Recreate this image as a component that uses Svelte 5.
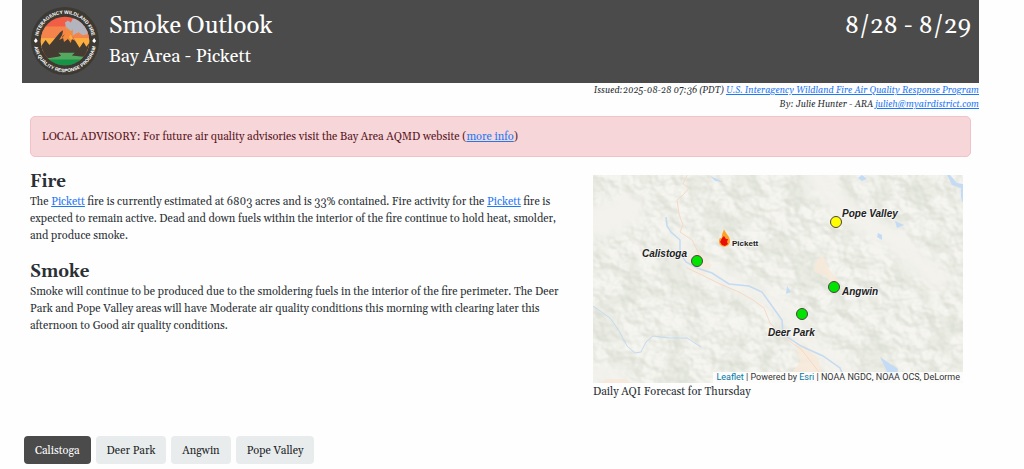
<svelte:options runes={true} />

<script lang="ts">
type Site = {
	name: string;
	x: number;
	y: number;
	labelX: number;
	labelY: number;
	color: string;
};

const sites: Site[] = [
	{ name: "Calistoga", x: 104, y: 86, labelX: 49, labelY: 82, color: "#00e400" },
	{ name: "Deer Park", x: 209, y: 139, labelX: 175, labelY: 161, color: "#00e400" },
	{ name: "Angwin", x: 241, y: 112, labelX: 249, labelY: 120, color: "#00e400" },
	{ name: "Pope Valley", x: 243, y: 47, labelX: 249, labelY: 42, color: "#ffff00" },
];

let active = $state("Calistoga");
</script>

<div class="page">
	<header class="banner">
		<svg class="logo" viewBox="0 0 72 72" role="img" aria-label="Interagency Wildland Fire Air Quality Response Program">
			<defs>
				<path id="ring-top" d="M 8 36 A 28 28 0 0 1 64 36" />
				<path id="ring-bottom" d="M 4 36 A 32 32 0 0 0 68 36" />
				<clipPath id="disc"><circle cx="36" cy="36" r="25" /></clipPath>
			</defs>
			<circle cx="36" cy="36" r="35" fill="#3d3933" />
			<g clip-path="url(#disc)">
				<rect x="10" y="10" width="52" height="52" fill="#f15d45" />
				<rect x="10" y="21" width="52" height="13" fill="#f5844c" />
				<rect x="10" y="33" width="52" height="14" fill="#fbad40" />
				<path
					d="M42 32 L37 23 L36 17 L39 15 L42 17 L44 13 L49 13 L51 16 L55 17 L60 24 L59 29 L54 30 L50 27 L46 29 Z"
					fill="#b3b4bd"
				/>
				<path
					d="M8 46 L16 35 L20 40 L31 27 L34 25 L33 31 L38 28 L44 32 L51 43 L55 37 L58 42 L64 34 V64 H8 Z"
					fill="#443b33"
				/>
				<path
					d="M30 35 L34 28 L33 33 L38 26 L37 21 L42 26 L44 24 L44 32 L47 36 L43 34 L42 38 L39 34 L35 37 L34 33 Z"
					fill="#f58a3c"
				/>
				<path d="M40 32 L42 29 L44 34 L42 35 Z" fill="#fbad40" />
				<path d="M10 55 L30 52 L32 51 L29 48 H46 L43 51 L62 53 V56 H10 Z" fill="#55a85f" />
				<rect x="10" y="55" width="52" height="8" fill="#159447" />
			</g>
			<text class="ring"><textPath href="#ring-top" startOffset="50%" text-anchor="middle">INTERAGENCY WILDLAND FIRE</textPath></text>
			<text class="ring"><textPath href="#ring-bottom" startOffset="50%" text-anchor="middle">AIR QUALITY RESPONSE PROGRAM</textPath></text>
			<path d="M4 36 L6 33 L8 36 L6 38 Z M64 36 L66 33 L68 36 L66 38 Z" fill="#fff" />
		</svg>
		<div class="titles">
			<h1>Smoke Outlook</h1>
			<p>Bay Area - Pickett</p>
		</div>
		<div class="dates">8/28 - 8/29</div>
	</header>

	<div class="issued">
		<div>Issued:2025-08-28 07:36 (PDT) <a href="#program">U.S. Interagency Wildland Fire Air Quality Response Program</a></div>
		<div>By: Julie Hunter - ARA <a href="mailto:julieh@myairdistrict.com">julieh@myairdistrict.com</a></div>
	</div>

	<div class="advisory" role="alert">
		LOCAL ADVISORY: For future air quality advisories visit the Bay Area AQMD website (<a href="#info">more info</a>)
	</div>

	<main class="columns">
		<div class="report">
			<section>
				<h2>Fire</h2>
				<p>
					The <a href="#pickett">Pickett</a> fire is currently estimated at 6803 acres and is 33% contained. Fire activity for the
					<a href="#pickett">Pickett</a> fire is expected to remain active. Dead and down fuels within the interior of the fire continue to
					hold heat, smolder, and produce smoke.
				</p>
			</section>
			<section>
				<h2>Smoke</h2>
				<p>
					Smoke will continue to be produced due to the smoldering fuels in the interior of the fire perimeter. The Deer Park and Pope
					Valley areas will have Moderate air quality conditions this morning with clearing later this afternoon to Good air quality
					conditions.
				</p>
			</section>
		</div>

		<figure>
			<div class="map">
				<svg viewBox="0 0 370 208" role="img" aria-label="Daily AQI forecast map">
					<defs>
						<!-- shaded relief -->
						<filter id="relief" x="0" y="0" width="100%" height="100%" color-interpolation-filters="sRGB">
							<feTurbulence type="fractalNoise" baseFrequency="0.05 0.055" numOctaves="3" seed="7" result="noise" />
							<feColorMatrix in="noise" type="matrix" values="0 0 0 0 0  0 0 0 0 0  0 0 0 0 0  1 0 0 0 0" />
							<feDiffuseLighting surfaceScale="9" diffuseConstant="1" lighting-color="#fff">
								<feDistantLight azimuth="315" elevation="50" />
							</feDiffuseLighting>
							<feColorMatrix type="matrix" values="0.09 0 0 0 0.875  0.08 0 0 0 0.882  0.1 0 0 0 0.845  0 0 0 0 1" />
						</filter>
						<!-- patches of woodland -->
						<filter id="woods" x="0" y="0" width="100%" height="100%" color-interpolation-filters="sRGB">
							<feTurbulence type="fractalNoise" baseFrequency="0.03" numOctaves="4" seed="21" />
							<feColorMatrix type="matrix" values="0 0 0 0 0.83  0 0 0 0 0.86  0 0 0 0 0.8  8 0 0 0 -4" />
						</filter>
						<filter id="soft"><feGaussianBlur stdDeviation="6" /></filter>
						<clipPath id="frame"><rect width="370" height="208" /></clipPath>
					</defs>
					<rect width="370" height="208" fill="#edeee8" />
					<rect width="370" height="208" filter="url(#relief)" />
					<rect width="370" height="208" filter="url(#woods)" opacity="0.3" />
					<g clip-path="url(#frame)">
						<!-- valley floors -->
						<g fill="none" stroke="#f3f2ed" stroke-linecap="round" filter="url(#soft)">
							<path d="M0 48 L34 36" stroke-width="34" />
							<path d="M84 62 L104 92 L140 108 L185 130 L215 165 L255 205" stroke-width="18" />
							<path d="M222 2 L255 38 L300 64 L345 105" stroke-width="24" />
							<path d="M0 200 L26 203" stroke-width="18" />
						</g>
						<g fill="#f7e9d8">
							<path d="M99 77 L108 77 L119 90 L111 100 L98 94 L93 83 Z" opacity="0.6" />
							<path d="M224 84 L231 82 L236 94 L245 105 L241 111 L232 101 L221 97 Z" opacity="0.8" />
							<path d="M202 167 L213 171 L225 183 L229 197 L218 205 L198 199 L207 187 Z" opacity="0.8" />
							<path d="M8 208 L13 204 H34 L38 208 Z" opacity="0.8" />
						</g>
						<g fill="none" stroke="#c3daf1" stroke-width="1">
							<path d="M73 42 L74 51 L78 57 L87 65 L87 78 L93 87 L104 93 L119 98 L136 109 L156 111 L169 117 L179 131 L189 145 L190 159 L208 171 L230 181 L247 193 L252 205" stroke-width="1.5" />
							<path d="M0 131 L17 143 L25 154 L34 171 L42 178 L48 177 L53 167 L60 161 L76 163 L94 163 L108 172" />
						</g>
						<path
							d="M94 0 L90 9 L96 13 L91 19 L84 25 L86 39 L90 50 L87 57 L99 65 L108 83 M94 93 L111 101 L127 109 L146 117 L160 125 L171 133 L177 148 L189 161 L208 174 L229 201"
							fill="none"
							stroke="#f5d9c6"
							stroke-width="1"
						/>
						<g fill="#c3dbf5">
							<path d="M117 1 L124 4 L130 7 L122 6 Z" />
							<path d="M265 3 L269 0 L274 4 L269 6 Z" />
							<path d="M302 46 L311 50 L304 53 Z" />
							<path d="M285 58 L289 60 L289 65 L284 62 Z" />
							<path d="M287 182 L305 194 L302 204 H292 L294 196 Z" />
							<path d="M194 111 L198 117 L193 119 Z" />
							<path d="M354 0 H357 L364 8 L370 9 V28 L368 22 L368 13 L359 10 Z" />
						</g>
					</g>
					<path d="M131 54 C132 58 137 61 137 66 C137 73 126 74 126 66 C126 63 128 62 129 64 C128 60 130 58 131 54 Z" fill="#ffa126" />
					<path d="M131 61 L133 64 L135 64 L134 67 L135 69 L132 71 L129 70 L127 67 L129 63 Z" fill="#e80e08" />
					<text class="fire-label" x="139" y="71">Pickett</text>
					{#each sites as site}
						<circle cx={site.x} cy={site.y} r="5.5" fill={site.color} stroke="#4b4440" stroke-width="1" />
						<text class="site-label" x={site.labelX} y={site.labelY}>{site.name}</text>
					{/each}
				</svg>
				<div class="attribution">
					<a href="#leaflet">Leaflet</a> | Powered by <a href="#esri">Esri</a> | NOAA NGDC, NOAA OCS, DeLorme
				</div>
			</div>
			<figcaption>Daily AQI Forecast for Thursday</figcaption>
		</figure>
	</main>

	<nav class="tabs">
		{#each sites as site}
			<button type="button" class:active={active === site.name} onclick={() => (active = site.name)}>{site.name}</button>
		{/each}
	</nav>
</div>

<style>
	:global(body) {
		background: #fefefe;
	}

	.page {
		margin: 0 45px 0 22px;
		font-family: Georgia, Gelasio, "Liberation Serif", serif;
		font-size: 11px;
		line-height: 17px;
		color: #2b3035;
	}

	h1,
	h2,
	p,
	figure {
		margin: 0;
	}

	a {
		color: #1f78f5;
	}

	.banner {
		display: flex;
		box-sizing: border-box;
		min-height: 83px;
		padding: 6px 8px;
		background: #4b4b4b;
		color: #fff;
	}

	.logo {
		width: 70px;
		height: 70px;
		flex: none;
	}

	.ring {
		font-family: "Liberation Sans", Arial, sans-serif;
		font-size: 5px;
		font-weight: 700;
		fill: #fff;
	}

	.titles {
		flex: 1;
		padding: 4px 9px;
	}

	h1,
	.dates {
		font-size: 24px;
		font-weight: 400;
		line-height: 32px;
	}

	.titles p {
		font-size: 18px;
		line-height: 30px;
	}

	.dates {
		padding-top: 4px;
	}

	.issued {
		padding-top: 1px;
		font-size: 9px;
		line-height: 14px;
		font-style: italic;
		text-align: right;
	}

	.advisory {
		margin: 4px 8px 0;
		padding: 12px 11px 10px;
		border: 1px solid #f1c2c6;
		border-radius: 5px;
		background: #f6d6d9;
		color: #58151c;
	}

	.columns {
		display: grid;
		grid-template-columns: 539px 370px;
		justify-content: space-between;
		margin: 14px 16px 0 8px;
	}

	.report {
		display: grid;
		gap: 16px;
		align-content: start;
	}

	h2 {
		font-size: 17px;
		line-height: 23px;
		font-weight: 700;
	}

	.map {
		position: relative;
		margin: 4px 0 1px;
	}

	.map svg {
		display: block;
		width: 100%;
	}

	.site-label,
	.fire-label {
		font-family: "Liberation Sans", Arial, sans-serif;
		font-weight: 700;
		fill: #222;
		stroke: #fff;
		stroke-opacity: 0.5;
		stroke-width: 2px;
		paint-order: stroke;
	}

	.site-label {
		font-size: 10px;
		font-style: italic;
	}

	.fire-label {
		font-size: 8px;
	}

	.attribution {
		position: absolute;
		right: 0;
		bottom: 0;
		padding: 0 3px;
		background: rgba(255, 255, 255, 0.8);
		font-family: Roboto, "Liberation Sans", Arial, sans-serif;
		font-size: 9px;
		line-height: 11px;
		color: #333;
	}

	.attribution a {
		color: #0078a8;
		text-decoration: none;
	}

	.tabs {
		display: flex;
		gap: 5px;
		margin: 35px 2px 0;
	}

	button {
		padding: 6px 11px 4px;
		border: 0;
		border-radius: 4px;
		background: #e9ecec;
		color: #212529;
		font: inherit;
		line-height: 18px;
	}

	button.active {
		background: #4b4b4b;
		color: #fff;
	}
</style>
